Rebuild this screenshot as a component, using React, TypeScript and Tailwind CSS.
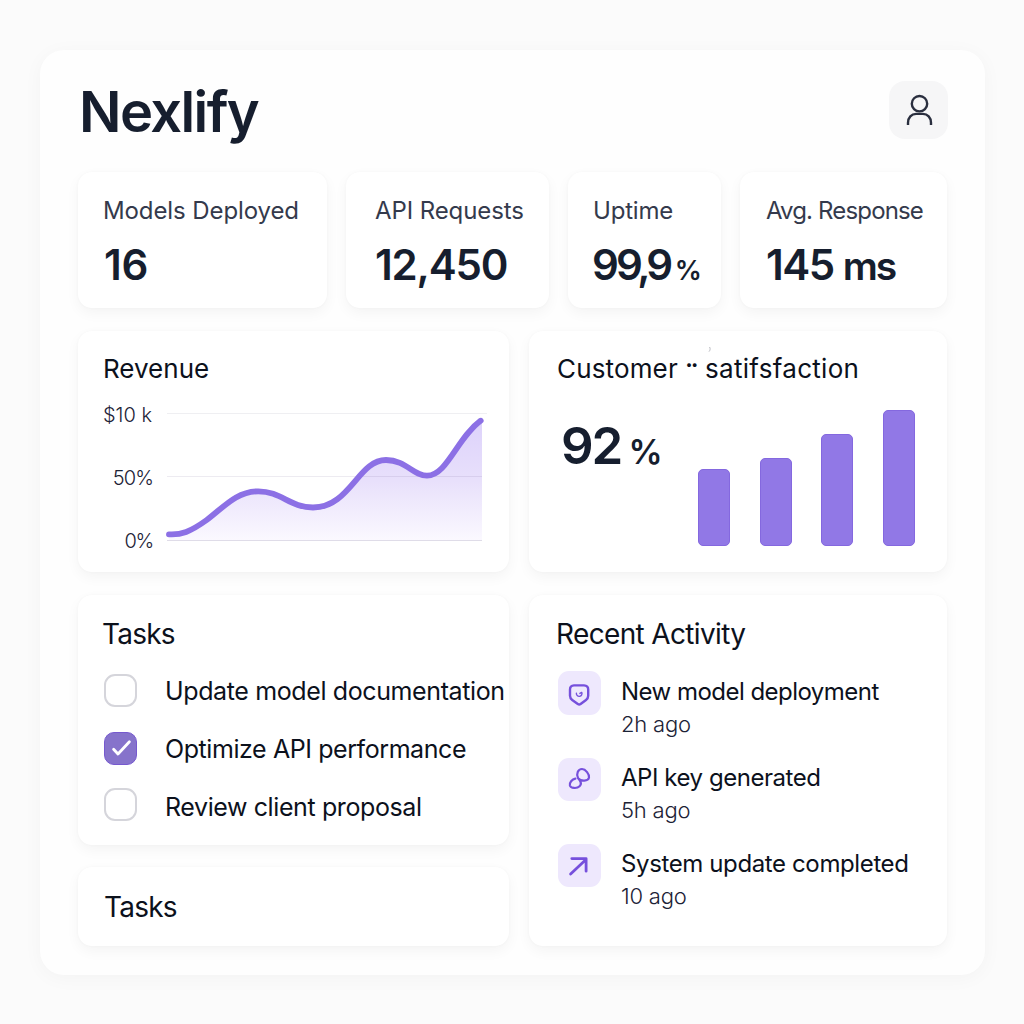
import React from "react";

const card =
  "rounded-[14px] bg-white shadow-[0_5px_14px_rgba(20,20,30,0.045),0_0_3px_rgba(20,20,30,0.03)]";

function Stat({ label, labelClass, className, children }: { label: string; labelClass: string; className: string; children: React.ReactNode }) {
  return (
    <div className={`${card} h-[136px] shrink-0 pt-[27px] whitespace-nowrap ${className}`}>
      <div className={`text-[24px] leading-none text-[#343a4c] ${labelClass}`}>{label}</div>
      <div className="mt-[21px] flex items-baseline text-[42px] leading-none font-semibold text-[#161e2e]">{children}</div>
    </div>
  );
}

function UserIcon() {
  return (
    <svg width="30" height="34" viewBox="0 0 30 34" fill="none" stroke="#2a2f3f" strokeWidth="2.4" strokeLinecap="butt">
      <circle cx="15.5" cy="10.7" r="7.7" />
      <path d="M4 32v-2.2c0-5.4 3.4-8.9 8.2-8.9h6.6c4.8 0 8.2 3.5 8.2 8.9V32" />
    </svg>
  );
}

function RevenueChart() {
  const curve =
    "M169 534.3 C181 535 190 532 206.7 520 C223 508 236 491.3 258.3 491.3 C281 491.3 290 507.5 313 507.5 C350 507.5 358 460 386 460 C406 460 413 475.7 427 475.7 C447 475.7 457 438 480.7 420.7";
  return (
    <svg className="shrink-0" width="324" height="144" viewBox="166 404 324 144" fill="none">
      <defs>
        <linearGradient id="area" x1="0" y1="420" x2="0" y2="541" gradientUnits="userSpaceOnUse">
          <stop offset="0" stopColor="#ddd2fb" />
          <stop offset="0.5" stopColor="#e8e0fb" />
          <stop offset="1" stopColor="#fbf9ff" />
        </linearGradient>
      </defs>
      <path d={`${curve} L482 420.7 V540.5 H169 Z`} fill="url(#area)" />
      <path d="M167 413.5H487" stroke="#efeff2" />
      <path d="M167 476.5H482" stroke="#5b4b80" strokeOpacity="0.11" />
      <path d="M167 540.5H482" stroke="#dfdce8" />
      <path d={curve} stroke="#8c70e5" strokeWidth="5.8" strokeLinecap="round" />
    </svg>
  );
}

const bars = ["h-[77px]", "h-[88px]", "h-[112px]", "h-[136px]"];

const tasks = [
  { text: "Update model documentation", done: false, row: "h-[33px]", cls: "tracking-[-0.38px] pt-[2px]" },
  { text: "Optimize API performance", done: true, row: "mt-[25px] h-[33px]", cls: "tracking-[-0.42px] pt-[2px]" },
  { text: "Review client proposal", done: false, row: "mt-[23px] h-[33px]", cls: "tracking-[-0.4px] pt-[5px]" },
];

function Shield() {
  return (
    <svg width="24" height="26" viewBox="0 0 24 26" fill="none" stroke="#7650dc" strokeWidth="2.4" strokeLinecap="round" strokeLinejoin="round">
      <path d="M6 5.4H16Q20.2 5.6 20.2 9.4V15.8Q20.2 18.4 18 20L12.6 24Q11.2 25 9.8 24L4.2 20Q2 18.4 2 15.8V9.4Q2 5.6 6 5.4Z" />
      <path d="M8.4 13.2A2.8 2.8 0 1 0 13.7 12.4L11.9 13.4" strokeWidth="1.4" />
    </svg>
  );
}

function Loops() {
  return (
    <svg width="24" height="26" viewBox="0 0 24 26" fill="none" stroke="#7650dc" strokeWidth="2.2" strokeLinecap="round" strokeLinejoin="round">
      <path d="M10.1 11.3C7.8 7 10.1 2 14 2C17.6 2 21.6 7.3 21 10.6C20.2 14.5 13 14.7 10.1 11.3C12.9 14.3 13.7 17.3 11.6 19.3C9 21.8 2.8 21.5 1.9 18.5C1.2 15.7 4 12.2 7.4 11.6" />
    </svg>
  );
}

function Arrow() {
  return (
    <svg width="24" height="26" viewBox="0 0 24 26" fill="none" stroke="#7650dc" strokeWidth="2.8" strokeLinecap="round" strokeLinejoin="round">
      <path d="M2.6 21L18 6.4M3.8 5.6H18.1V18.2" />
    </svg>
  );
}

const activity = [
  { icon: <Shield />, title: "New model deployment", time: "2h ago", cls: "tracking-[-0.53px]", tile: "h-[44px]" },
  { icon: <Loops />, title: "API key generated", time: "5h ago", cls: "tracking-[-0.45px]", tile: "mt-px h-[43px]" },
  { icon: <Arrow />, title: "System update completed", time: "10 ago", cls: "tracking-[-0.38px]", tile: "mt-px h-[43px]" },
];

export default function App() {
  return (
    <div className="h-[1024px] w-[1024px] overflow-hidden bg-[#fbfbfb] pt-[50px] pl-[40px] font-['Inter',sans-serif] text-[#0c111c]">
      <main className="h-[925px] w-[945px] rounded-[24px] bg-[#fefefe] pt-[31px] pr-[38px] pl-[38px] shadow-[0_3px_20px_rgba(20,20,30,0.035)]">
        <header className="flex h-[58px] items-start justify-between">
          <h1 className="pt-[3px] pl-px text-[56px] leading-none font-semibold tracking-[-1.6px] text-[#161e2e]">Nexlify</h1>
          <button className="-mr-[1px] flex h-[58px] w-[59px] items-center justify-center rounded-[16px] bg-[#f6f6f7]" aria-label="Profile">
            <UserIcon />
          </button>
        </header>

        <section className="mt-[33px] flex justify-between">
          <Stat label="Models Deployed" className="w-[249px] pl-[25px]" labelClass="tracking-[-0.1px]">
            <span className="pl-px tracking-[-0.3px]">16</span>
          </Stat>
          <Stat label="API Requests" className="w-[203px] pl-[29px]" labelClass="tracking-[-0.1px]">
            <span className="tracking-[-1.2px]">12,450</span>
          </Stat>
          <Stat label="Uptime" className="w-[153px] pl-[25px]" labelClass="tracking-[-0.2px]">
            <span className="-ml-px tracking-[-3.4px]"><span className="tracking-[-3px]">9</span><span className="tracking-[-4.4px]">9,</span>9</span>
            <span className="ml-[5px] text-[27px] tracking-[-1px]">%</span>
          </Stat>
          <Stat label="Avg. Response" className="w-[207px] pl-[26px]" labelClass="tracking-[-0.85px]">
            <span className="tracking-[-1.5px]">145</span>
            <span className="ml-[9px] text-[39px] tracking-[-2px]">ms</span>
          </Stat>
        </section>

        <section className="mt-[23px] flex justify-between">
          <div className={`${card} h-[241px] w-[431px] pt-[25px] pl-[25px]`}>
            <h2 className="text-[26px] leading-none">Revenue</h2>
            <div className="mt-[22px] flex">
              <div className="flex w-[50px] flex-col items-end pt-[1px] text-[20px] leading-none font-light whitespace-nowrap text-[#1c2236]">
                <span className="mr-px">$10 k</span>
                <span className="mt-[43px] tracking-[-0.9px]">50%</span>
                <span className="mt-[43px] tracking-[-1.3px]">0%</span>
              </div>
              <div className="ml-[13px]">
                <RevenueChart />
              </div>
            </div>
          </div>

          <div className={`${card} relative h-[241px] w-[418px] pt-[25px] pl-[28px] whitespace-nowrap`}>
            <svg className="absolute top-[15px] left-[178px]" width="5" height="7" viewBox="0 0 5 7" fill="none">
              <path d="M2.6 1C3.6 2.8 3 4.6 2 5.6" stroke="#b9bac0" />
            </svg>
            <h2 className="flex text-[26px] leading-none">
              <span className="tracking-[0.15px]">Customer</span>
              <span className="relative top-[5px] ml-[6px] font-bold">¨</span>
              <span className="ml-[5px] tracking-[0.3px]">satifsfaction</span>
            </h2>
            <div className="mt-[28px] flex">
              <div className="flex w-[141px] items-baseline self-start pt-[10px] pl-[4px] text-[#161e2e]">
                <span className="text-[51px] leading-none font-semibold tracking-[-2px]">92</span>
                <span className="ml-[7px] text-[34px] leading-none font-semibold tracking-[-1px]">%</span>
              </div>
              <div className="flex h-[136px] w-[217px] items-end justify-between">
                {bars.map((h) => (
                  <div key={h} className={`${h} w-[32px] rounded-[5px] border border-[#8468df] bg-[#9178e6]`} />
                ))}
              </div>
            </div>
          </div>
        </section>

        <section className="mt-[23px] flex justify-between">
          <div className="flex w-[431px] flex-col gap-[22px]">
            <div className={`${card} h-[250px] pt-[25px] pl-[25px] whitespace-nowrap`}>
              <h2 className="-ml-px text-[28px] leading-none tracking-[-0.8px]">Tasks</h2>
              <div className="mt-[26px]">
                {tasks.map((t) => (
                  <div key={t.text} className={`flex items-center ${t.row}`}>
                    {t.done ? (
                      <span className="ml-px flex h-[33px] w-[33px] shrink-0 items-center justify-center rounded-[10px] border border-[#7659cf] bg-[#8673cb]">
                        <svg width="22" height="20" viewBox="0 0 22 20" fill="none" stroke="#fff" strokeWidth="2.8" strokeLinecap="round" strokeLinejoin="round">
                          <path d="M3.6 10.2L8 15L19.4 2.8" />
                        </svg>
                      </span>
                    ) : (
                      <span className="ml-px h-[33px] w-[33px] shrink-0 rounded-[11px] border-2 border-[#d5d5db] bg-white" />
                    )}
                    <span className={`ml-[28px] text-[25px] leading-none ${t.cls}`}>{t.text}</span>
                  </div>
                ))}
              </div>
            </div>
            <div className={`${card} h-[79px] pt-[26px] pl-[26px]`}>
              <h2 className="text-[28px] leading-none tracking-[-0.8px]">Tasks</h2>
            </div>
          </div>

          <div className={`${card} h-[351px] w-[418px] pt-[25px] pl-[27px] whitespace-nowrap`}>
            <h2 className="text-[28px] leading-none tracking-[-0.65px]">Recent Activity</h2>
            <div className="mt-[23px] flex flex-col gap-[42px]">
              {activity.map((a) => (
                <div key={a.title} className="flex h-[44px]">
                  <span className={`ml-[2px] flex w-[43px] shrink-0 items-center justify-center rounded-[11px] bg-[#eee8fd] ${a.tile}`}>{a.icon}</span>
                  <div className="ml-[20px] pt-[9px]">
                    <div className={`text-[24px] leading-none ${a.cls}`}>{a.title}</div>
                    <div className="mt-[9px] text-[22px] leading-none font-light tracking-[-0.2px] text-[#1c2236]">{a.time}</div>
                  </div>
                </div>
              ))}
            </div>
          </div>
        </section>
      </main>
    </div>
  );
}
